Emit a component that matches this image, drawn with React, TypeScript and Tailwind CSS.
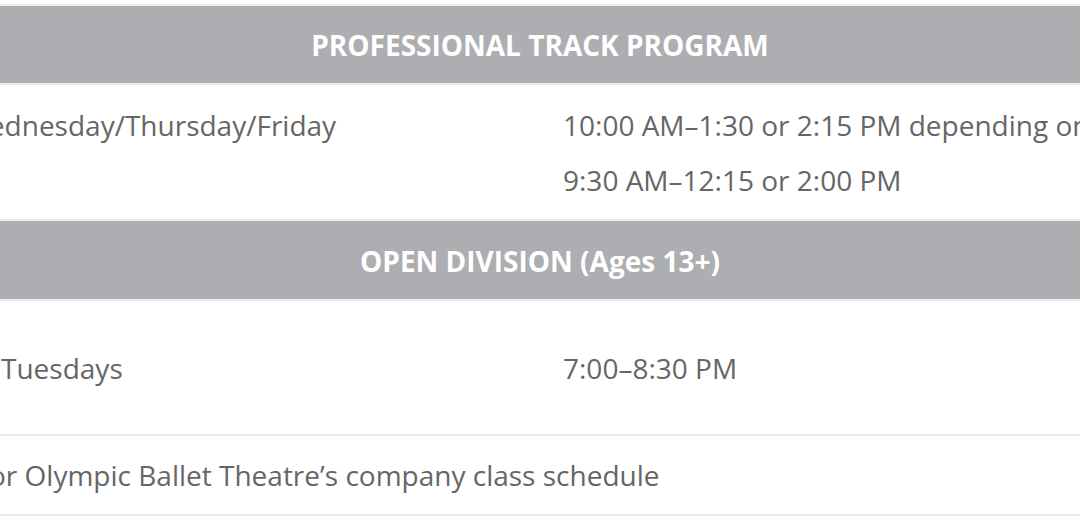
export default function App() {
  return (
    <div className="h-[522px] w-[1080px] overflow-hidden bg-white pt-[4px] font-['Open_Sans',sans-serif] text-[28px] text-[#666666]">
      <div className="flex h-[81px] items-center justify-center border-y-2 border-[#ebebeb] bg-[#adaeb1] pt-[1px] font-bold text-white">
        PROFESSIONAL TRACK PROGRAM
      </div>
      <div className="grid h-[134px] grid-cols-[563px_1fr] pt-[13px] pb-[11px] leading-[55px] whitespace-nowrap">
        <div>
          <span className="-ml-[37px]">Wednesday/Thursday/Friday</span>
        </div>
        <div className="overflow-hidden">
          <p>10:00 AM–1:30 or 2:15 PM depending on day</p>
          <p>9:30 AM–12:15 or 2:00 PM</p>
        </div>
      </div>
      <div className="flex h-[82px] items-center justify-center border-y-2 border-[#ebebeb] bg-[#adaeb1] pt-[1px] font-bold text-white">
        OPEN DIVISION (Ages 13+)
      </div>
      <div className="grid h-[133px] grid-cols-[563px_1fr] items-center pt-[1px] whitespace-nowrap">
        <div className="pl-[1px]">Tuesdays</div>
        <div>7:00–8:30 PM</div>
      </div>
      <div className="flex h-[82px] items-center border-y-2 border-[#ebebeb] whitespace-nowrap">
        <span className="-ml-[11px]">or Olympic Ballet Theatre’s company class schedule</span>
      </div>
    </div>
  );
}
